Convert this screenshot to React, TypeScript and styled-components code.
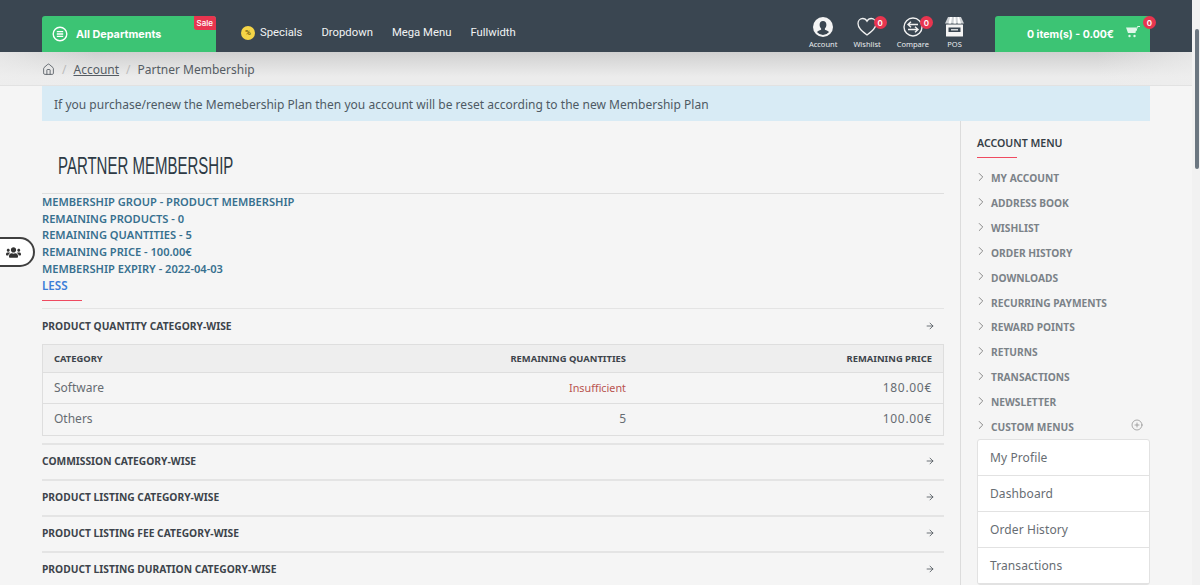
import React from "react";
import styled, { createGlobalStyle } from "styled-components";
import { ChevronRight, ArrowRight, CirclePlus, House } from "lucide-react";
import { FaUsers } from "react-icons/fa";

const Global = createGlobalStyle`
  html, body {
    margin: 0;
    height: 585px;
    overflow: hidden;
    background: #f5f5f5;
    font-family: "Noto Sans", "Liberation Sans", sans-serif;
  }
  * { box-sizing: border-box; }
`;

const Page = styled.div`
  display: flex;
  width: 1200px;
  height: 585px;
  overflow: hidden;
`;

const Main = styled.div`
  width: 1192px;
  flex: none;
`;

const TopBar = styled.header`
  height: 52px;
  background: #3a4651;
  padding: 16px 42px 0;
  display: flex;
`;

const GreenButton = styled.div<{ $w: number }>`
  width: ${(p) => p.$w}px;
  height: 36px;
  background: #3cc474;
  border-radius: 3px 3px 0 0;
  color: #fff;
  font-family: Inter, sans-serif;
  font-weight: 700;
  font-size: 10.8px;
  white-space: nowrap;
  display: flex;
  align-items: center;
  position: relative;
  flex: none;
`;

const Sale = styled.span`
  position: absolute;
  top: 0;
  right: 0;
  background: #e8354f;
  border-radius: 0 3px 0 3px;
  font-size: 8px;
  line-height: 14px;
  height: 14px;
  padding: 0 3px;
  font-weight: 500;
`;

const NavLinks = styled.nav`
  display: flex;
  align-items: center;
  gap: 19px;
  margin-left: 25px;
  height: 33px;
`;

const NavLink = styled.span`
  color: #f1f3f4;
  font-family: Roboto, sans-serif;
  font-size: 11.3px;
  display: flex;
  align-items: center;
  gap: 5px;
`;

const PercentCoin = styled.span`
  width: 14px;
  height: 14px;
  border-radius: 50%;
  background: #f5d547;
  color: #7a6410;
  font-size: 8px;
  font-weight: 700;
  display: inline-flex;
  align-items: center;
  justify-content: center;
`;

const IconBar = styled.div`
  margin-left: auto;
  margin-top: 1px;
  display: flex;
  gap: 16px;
  margin-right: 31px;
  align-items: flex-start;
`;

const IconItem = styled.div`
  position: relative;
  display: flex;
  flex-direction: column;
  align-items: center;
  color: #e9ecee;
  font-size: 7.5px;
  line-height: 10px;
  gap: 2px;
`;

const Counter = styled.span<{ $right?: number }>`
  position: absolute;
  top: -1px;
  right: ${(p) => p.$right ?? -3}px;
  width: 13px;
  height: 13px;
  border-radius: 50%;
  background: #e8354f;
  color: #fff;
  font-family: Inter, sans-serif;
  font-size: 8px;
  font-weight: 600;
  display: flex;
  align-items: center;
  justify-content: center;
`;

const CartText = styled.span`
  margin-left: 32px;
  font-size: 10.5px;
`;

const CartIcon = styled.svg`
  margin-left: 12px;
  margin-top: -5px;
`;

const MenuIcon = styled.svg`
  margin: 0 8px 0 10px;
`;

const CartCounter = styled(Counter)`
  top: 0;
  right: -6px;
`;

const Crumbs = styled.div`
  height: 34px;
  padding: 1px 42px 0;
  display: flex;
  align-items: center;
  background:
    linear-gradient(90deg, rgba(238, 238, 238, 0.7), transparent 8%, transparent 92%, rgba(238, 238, 238, 0.7)),
    linear-gradient(#d0d0d0, #ececec 75%);
  border-bottom: 1px solid #e2e2e2;
  color: #555c63;
  font-size: 12px;
`;

const Slash = styled.span`
  color: #bbb;
  margin: 0 7px;
`;

const CrumbLink = styled.a`
  color: #555c63;
  text-decoration: underline;
`;

const Alert = styled.div`
  margin: 0 42px;
  height: 35px;
  padding: 1px 12px 0;
  background: #d8ebf5;
  color: #4e5a64;
  font-size: 12px;
  letter-spacing: 0.02px;
  display: flex;
  align-items: center;
`;

const Columns = styled.div`
  display: flex;
  padding-left: 42px;
`;

const Content = styled.main`
  width: 902px;
  flex: none;
`;

const Title = styled.h1`
  margin: 0;
  height: 73px;
  padding: 30px 0 0 16px;
  border-bottom: 1px solid #dedede;
  font-family: "Liberation Sans", sans-serif;
  font-weight: 400;
  font-size: 24px;
  line-height: 30px;
  color: #2d3a45;
`;

const TitleText = styled.span`
  display: inline-block;
  white-space: nowrap;
  transform: scaleX(0.625);
  transform-origin: left center;
`;

const InfoLine = styled.div<{ $link?: boolean }>`
  font-size: ${(p) => (p.$link ? 11.6 : 11.1)}px;
  line-height: 16.7px;
  font-weight: 600;
  color: ${(p) => (p.$link ? "#3b7dd8" : "#37708f")};
`;

const RedRule = styled.div<{ $top?: number }>`
  width: 40px;
  height: 1px;
  background: #ef4a60;
  margin-top: ${(p) => p.$top ?? 0}px;
`;

const Accordion = styled.div<{ $thick?: boolean; $top?: number }>`
  height: 36px;
  margin-top: ${(p) => p.$top ?? 0}px;
  border-top: ${(p) => (p.$thick ? 2 : 1)}px solid #e4e4e4;
  padding: 0 9px 2px 0;
  display: flex;
  align-items: center;
  justify-content: space-between;
  font-size: 10.25px;
  font-weight: 700;
  color: #3d444b;
`;

const Table = styled.div`
  border: 1px solid #dedede;
  padding-bottom: 1px;
  margin-bottom: 7px;
`;

const Row = styled.div<{ $head?: boolean }>`
  display: grid;
  grid-template-columns: 1fr 1fr 306px;
  align-items: center;
  height: ${(p) => (p.$head ? 27 : 31)}px;
  padding: 0 11px ${(p) => (p.$head ? 0 : 1)}px;
  background: ${(p) => (p.$head ? "#eeeeee" : "transparent")};
  border-top: ${(p) => (p.$head ? "0" : "1px solid #dedede")};
  font-size: ${(p) => (p.$head ? "9.4px" : "12px")};
  font-weight: ${(p) => (p.$head ? 700 : 400)};
  color: ${(p) => (p.$head ? "#3d444b" : "#666c72")};
`;

const Cell = styled.span<{ $right?: boolean }>`
  text-align: ${(p) => (p.$right ? "right" : "left")};
`;

const Warning = styled(Cell)`
  color: #b9534f;
  font-size: 10.8px;
`;

const Amount = styled(Cell)`
  letter-spacing: 0.7px;
`;

const Sidebar = styled.aside`
  margin-left: 16px;
  width: 190px;
  height: 464px;
  flex: none;
  border-left: 1px solid #dcdcdc;
  padding: 16px 0 0 16px;
`;

const SideTitle = styled.div`
  font-size: 10.6px;
  font-weight: 600;
  line-height: 13px;
  color: #353e47;
  margin-bottom: 7px;
`;

const SideList = styled.ul`
  list-style: none;
  margin: 8px 0 0;
  padding: 0;
  width: 173px;
`;

const SideItem = styled.li`
  height: 24.85px;
  display: flex;
  align-items: center;
  gap: 3px;
  font-size: 10.2px;
  font-weight: 700;
  color: #7b8288;
  svg:first-child {
    color: #888;
    margin: -3px 0 0 -3px;
  }
`;

const Plus = styled.span`
  margin-left: auto;
  margin-right: 7px;
  display: flex;
  color: #6c7278;
`;

const CustomCard = styled.div`
  width: 173px;
  background: #fff;
  border: 1px solid #e2e2e2;
  border-radius: 3px;
`;

const CustomLink = styled.div`
  height: 36px;
  padding-left: 12px;
  display: flex;
  align-items: center;
  border-bottom: 1px solid #e2e2e2;
  color: #676d73;
  font-size: 12px;
  letter-spacing: 0.1px;
`;

const ScrollTrack = styled.div`
  width: 8px;
  flex: none;
  height: 585px;
  background: #f1f1f1;
  position: relative;
`;

const ScrollThumb = styled.div`
  position: absolute;
  top: 29px;
  left: 3px;
  width: 4px;
  height: 140px;
  border-radius: 2px;
  background: #6b7680;
`;

const SideTab = styled.div`
  position: fixed;
  left: 0;
  top: 237px;
  width: 35px;
  height: 30px;
  background: #fff;
  border: 2px solid #3f3f3f;
  border-left: 0;
  border-radius: 0 15px 15px 0;
  display: flex;
  align-items: center;
  justify-content: center;
  padding-right: 6px;
  color: #333;
`;

const accordions = [
  "COMMISSION CATEGORY-WISE",
  "PRODUCT LISTING CATEGORY-WISE",
  "PRODUCT LISTING FEE CATEGORY-WISE",
  "PRODUCT LISTING DURATION CATEGORY-WISE",
];

const menu = [
  "MY ACCOUNT",
  "ADDRESS BOOK",
  "WISHLIST",
  "ORDER HISTORY",
  "DOWNLOADS",
  "RECURRING PAYMENTS",
  "REWARD POINTS",
  "RETURNS",
  "TRANSACTIONS",
  "NEWSLETTER",
];

const info = [
  "MEMBERSHIP GROUP - PRODUCT MEMBERSHIP",
  "REMAINING PRODUCTS - 0",
  "REMAINING QUANTITIES - 5",
  "REMAINING PRICE - 100.00€",
  "MEMBERSHIP EXPIRY - 2022-04-03",
];

const MenuRound = () => (
  <MenuIcon width="16" height="16" viewBox="0 0 16 16" fill="none" stroke="#fff">
    <circle cx="8" cy="8" r="6.8" strokeWidth="1.4" />
    <path d="M4.8 5.6h6.4M4.8 8h6.4M4.8 10.4h6.4" strokeWidth="1.4" />
  </MenuIcon>
);

const AccountIcon = () => (
  <svg width="20" height="20" viewBox="0 0 20 20">
    <circle cx="10" cy="10" r="10" fill="#f4f4f4" />
    <path d="M10 4c2.2 0 3.4 1.700 3.400 3.800 0 1.600-.7 3-1.500 3.700v1.200c1.800.7 3.400 1.400 4.200 2.300A8 8 0 0 1 10 18a8 8 0 0 1-6.100-3c.8-.9 2.400-1.600 4.200-2.300v-1.200c-.8-.7-1.500-2.100-1.500-3.700C6.600 5.700 7.800 4 10 4z" fill="#3a4651" />
  </svg>
);

const HeartIcon = () => (
  <svg width="20" height="20" viewBox="0 0 20 20" fill="none" stroke="#f1f1f1" strokeWidth="1.3">
    <path d="M10 18C5 14 1 11 1 6.500 1 3.500 3.200 1.500 5.700 1.500c1.900 0 3.400 1 4.300 2.700.9-1.700 2.400-2.700 4.300-2.700 2.500 0 4.700 2 4.700 5 0 4.500-4 7.500-9 11.500z" />
  </svg>
);

const CompareIcon = () => (
  <svg width="20" height="20" viewBox="0 0 20 20" fill="none" stroke="#f1f1f1">
    <circle cx="10" cy="10" r="9" strokeWidth="1.4" />
    <path d="M5 7.500h10M8 4.800 5 7.500 8 10.200M15 12.500H5M12 9.800l3 2.700-3 2.700" strokeWidth="1.4" />
  </svg>
);

const PosIcon = () => (
  <svg width="19" height="20" viewBox="0 0 19 20">
    <path d="M3 0h13l3 6.500H0z" fill="#cfd3d6" />
    <path d="M5 0h2L6 6.500H3.500zM9 0h1.500L11 6.500H8.500zM12.500 0H14l2 6.500h-3z" fill="#fff" />
    <rect x="1" y="7.500" width="17" height="12" rx="0.5" fill="#f4f4f4" />
    <rect x="3.500" y="10.500" width="12" height="4.500" fill="#3a4651" />
    <rect x="6" y="12" width="7" height="1.500" fill="#cfd3d6" />
  </svg>
);

const CartGlyph = () => (
  <CartIcon width="14" height="12" viewBox="0 0 14 12">
    <path d="M0 1.500h10.500L9.500 7H2z" fill="#dff7e9" />
    <path d="M10 5 11.500.5H14" stroke="#dff7e9" fill="none" strokeWidth="1" />
    <circle cx="3.500" cy="10" r="1.200" fill="#dff7e9" />
    <circle cx="8.500" cy="10" r="1.200" fill="#dff7e9" />
  </CartIcon>
);

export default function App() {
  return (
    <Page>
      <Global />
      <Main>
        <TopBar>
          <GreenButton $w={174}>
            <MenuRound />
            All Departments
            <Sale>Sale</Sale>
          </GreenButton>
          <NavLinks>
            <NavLink>
              <PercentCoin>%</PercentCoin>
              Specials
            </NavLink>
            <NavLink>Dropdown</NavLink>
            <NavLink>Mega Menu</NavLink>
            <NavLink>Fullwidth</NavLink>
          </NavLinks>
          <IconBar>
            <IconItem>
              <AccountIcon />
              Account
            </IconItem>
            <IconItem>
              <HeartIcon />
              <Counter $right={-6}>0</Counter>
              Wishlist
            </IconItem>
            <IconItem>
              <CompareIcon />
              <Counter $right={-4}>0</Counter>
              Compare
            </IconItem>
            <IconItem>
              <PosIcon />
              POS
            </IconItem>
          </IconBar>
          <GreenButton $w={155}>
            <CartText>0 item(s) - 0.00€</CartText>
            <CartGlyph />
            <CartCounter>0</CartCounter>
          </GreenButton>
        </TopBar>
        <Crumbs>
          <House size={13} strokeWidth={1.6} />
          <Slash>/</Slash>
          <CrumbLink>Account</CrumbLink>
          <Slash>/</Slash>
          Partner Membership
        </Crumbs>
        <Alert>If you purchase/renew the Memebership Plan then you account will be reset according to the new Membership Plan</Alert>
        <Columns>
          <Content>
            <Title>
              <TitleText>PARTNER MEMBERSHIP</TitleText>
            </Title>
            {info.map((line) => (
              <InfoLine key={line}>{line}</InfoLine>
            ))}
            <InfoLine $link>LESS</InfoLine>
            <RedRule $top={6} />
            <Accordion $top={7}>
              PRODUCT QUANTITY CATEGORY-WISE
              <ArrowRight size={10} strokeWidth={1.8} />
            </Accordion>
            <Table>
              <Row $head>
                <Cell>CATEGORY</Cell>
                <Cell $right>REMAINING QUANTITIES</Cell>
                <Cell $right>REMAINING PRICE</Cell>
              </Row>
              <Row>
                <Cell>Software</Cell>
                <Warning $right>Insufficient</Warning>
                <Amount $right>180.00€</Amount>
              </Row>
              <Row>
                <Cell>Others</Cell>
                <Cell $right>5</Cell>
                <Amount $right>100.00€</Amount>
              </Row>
            </Table>
            {accordions.map((a) => (
              <Accordion key={a} $thick>
                {a}
                <ArrowRight size={10} strokeWidth={1.8} />
              </Accordion>
            ))}
          </Content>
          <Sidebar>
            <SideTitle>ACCOUNT MENU</SideTitle>
            <RedRule />
            <SideList>
              {menu.map((m) => (
                <SideItem key={m}>
                  <ChevronRight size={14} strokeWidth={1.7} />
                  {m}
                </SideItem>
              ))}
              <SideItem>
                <ChevronRight size={14} strokeWidth={1.7} />
                CUSTOM MENUS
                <Plus>
                  <CirclePlus size={12} strokeWidth={1.4} />
                </Plus>
              </SideItem>
            </SideList>
            <CustomCard>
              <CustomLink>My Profile</CustomLink>
              <CustomLink>Dashboard</CustomLink>
              <CustomLink>Order History</CustomLink>
              <CustomLink>Transactions</CustomLink>
            </CustomCard>
          </Sidebar>
        </Columns>
      </Main>
      <ScrollTrack>
        <ScrollThumb />
      </ScrollTrack>
      <SideTab>
        <FaUsers size={15} />
      </SideTab>
    </Page>
  );
}
